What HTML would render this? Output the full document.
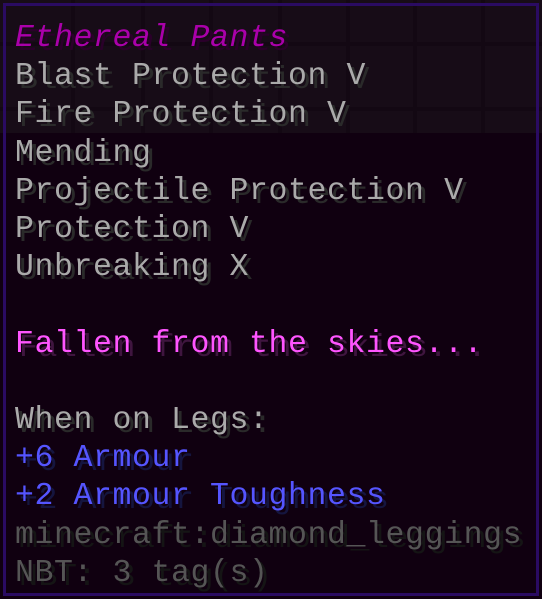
<!DOCTYPE html>
<html><head><style>
html,body{margin:0;padding:0;background:#100010;}
#w{position:relative;width:542px;height:599px;overflow:hidden;background:#100010;}
#top{position:absolute;left:0;top:0;width:542px;height:133px;background:#170c17;}
.v{position:absolute;top:0;height:133px;width:4px;background:#130813;}
.h{position:absolute;left:0;width:542px;height:4px;background:#130813;}
#b{position:absolute;left:3px;top:3px;right:3px;bottom:3px;border:3px solid #2a0b62;}
#t{position:absolute;left:15px;top:20px;font-family:"Liberation Mono",monospace;font-size:31.5px;line-height:38.2px;white-space:pre;letter-spacing:0.6px;}
.g{color:#aaaaaa;text-shadow:4px 4px 0 #2a2a2a;}
.m{color:#aa00aa;font-style:italic;text-shadow:4px 4px 0 #2a002a;}
.p{color:#ff55ff;text-shadow:4px 4px 0 #3f153f;}
.bl{color:#5555ff;text-shadow:4px 4px 0 #15153f;}
.d{color:#555555;text-shadow:4px 4px 0 #151515;}
</style></head><body><div id="w">
<div id="top"></div>
<div class="v" style="left:71px"></div><div class="v" style="left:141px"></div><div class="v" style="left:209px"></div><div class="v" style="left:278px"></div><div class="v" style="left:346px"></div><div class="v" style="left:413px"></div><div class="v" style="left:481px"></div>
<div class="h" style="top:42px"></div><div class="h" style="top:107px"></div>
<div id="b"></div>
<div id="t"><span class="m">Ethereal Pants</span>
<span class="g">Blast Protection V</span>
<span class="g">Fire Protection V</span>
<span class="g">Mending</span>
<span class="g">Projectile Protection V</span>
<span class="g">Protection V</span>
<span class="g">Unbreaking X</span>

<span class="p">Fallen from the skies...</span>

<span class="g">When on Legs:</span>
<span class="bl">+6 Armour</span>
<span class="bl">+2 Armour Toughness</span>
<span class="d">minecraft:diamond_leggings</span>
<span class="d">NBT: 3 tag(s)</span></div>
</div></body></html>
